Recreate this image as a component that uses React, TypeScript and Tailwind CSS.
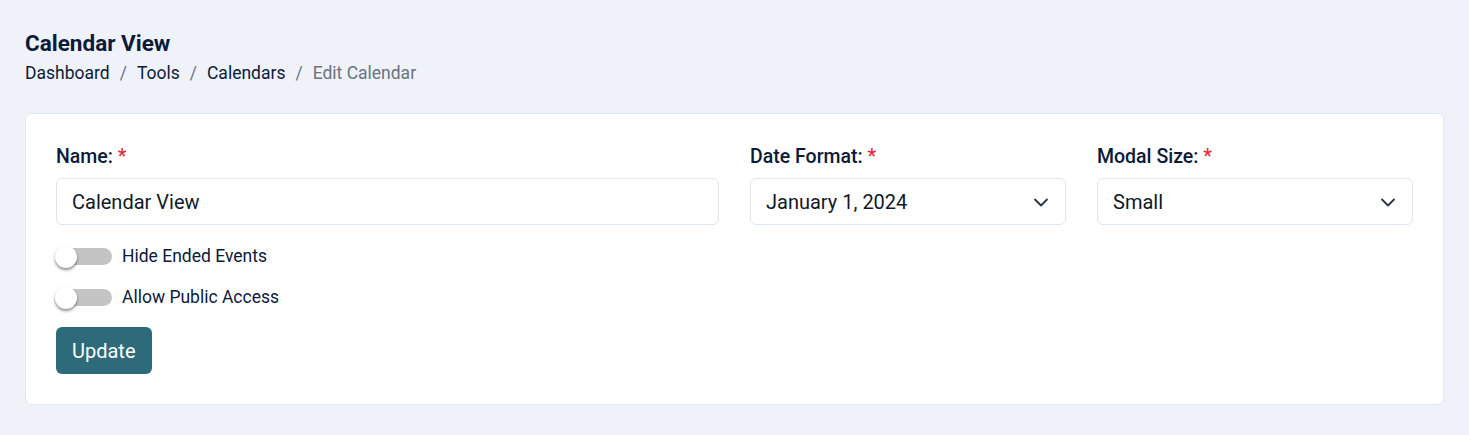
import { useState } from 'react';

function Chevron() {
  return (
    <svg width="24" height="24" viewBox="0 0 24 24" fill="none" stroke="#2b3340" strokeWidth="1.8" strokeLinecap="round" strokeLinejoin="round">
      <path d="M6 9.5l6 6 6-6" />
    </svg>
  );
}

function Toggle({ label }: { label: string }) {
  const [on, setOn] = useState(false);
  return (
    <label className="flex h-[22px] cursor-pointer items-center gap-[10px]" onClick={() => setOn(!on)}>
      <span className="relative flex h-[17px] w-[56px] items-center rounded-full bg-[#c4c4c4]">
        <span
          className={
            on
              ? 'absolute left-[34px] top-[-2px] h-[22px] w-[22px] rounded-full bg-white shadow-[0_2px_3px_rgba(0,0,0,0.45)]'
              : 'absolute left-[-1px] top-[-2px] h-[22px] w-[22px] rounded-full bg-white shadow-[0_2px_3px_rgba(0,0,0,0.45)]'
          }
        />
      </span>
      <span className="text-[17.5px] leading-[22px] text-[#0c1a3a]">{label}</span>
    </label>
  );
}

function Label({ text }: { text: string }) {
  return (
    <p className="mb-[10px] text-[19.5px] font-medium leading-[22px] text-[#0c1a3a]">
      {text} <span className="text-[#e02d3c]">*</span>
    </p>
  );
}

function Select({ value }: { value: string }) {
  return (
    <div className="flex h-[47px] items-center justify-between rounded-[6px] border border-[#dfe5ee] bg-white pl-[15px] pr-[12px]">
      <span className="text-[20px] text-[#111827]">{value}</span>
      <Chevron />
    </div>
  );
}

export default function App() {
  return (
    <main
      className="min-h-[435px] bg-[#eff2f9] px-[25px] pt-[30px] pb-[30px]"
      style={{ fontFamily: 'Roboto, "Liberation Sans", sans-serif' }}
    >
      <h1 className="text-[22.5px] font-bold leading-[26px] text-[#0c1a3a]">Calendar View</h1>
      <nav className="mt-[7px] flex items-center gap-[10px] text-[17.5px] leading-[20px] text-[#0c1a3a]">
        <span>Dashboard</span>
        <span className="text-[#6b7280]">/</span>
        <span>Tools</span>
        <span className="text-[#6b7280]">/</span>
        <span>Calendars</span>
        <span className="text-[#6b7280]">/</span>
        <span className="text-[#6b7280]">Edit Calendar</span>
      </nav>

      <section className="mt-[30px] rounded-[7px] border border-[#e2e8f0] bg-white px-[30px] pt-[32px] pb-[30px]">
        <div className="grid grid-cols-4 gap-x-[31px]">
          <div className="col-span-2">
            <Label text="Name:" />
            <div className="flex h-[47px] items-center rounded-[6px] border border-[#dfe5ee] bg-white px-[15px]">
              <span className="text-[20px] text-[#111827]">Calendar View</span>
            </div>
          </div>
          <div>
            <Label text="Date Format:" />
            <Select value="January 1, 2024" />
          </div>
          <div>
            <Label text="Modal Size:" />
            <Select value="Small" />
          </div>
        </div>

        <div className="mt-[20px] flex flex-col gap-[19px]">
          <Toggle label="Hide Ended Events" />
          <Toggle label="Allow Public Access" />
        </div>

        <button
          type="button"
          className="mt-[19px] h-[47px] rounded-[6px] bg-[#2e6b7a] px-[16px] text-[20px] text-white"
        >
          Update
        </button>
      </section>
    </main>
  );
}
